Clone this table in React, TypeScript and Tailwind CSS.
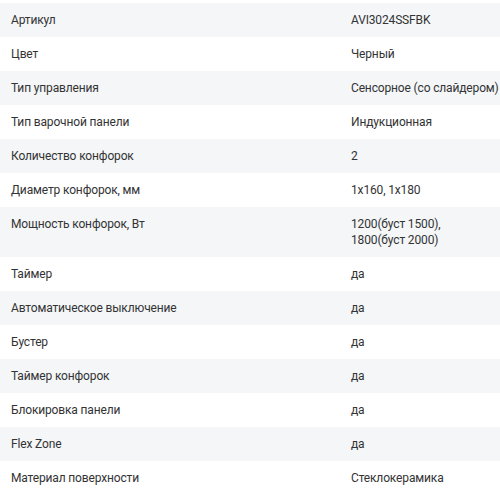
import React from "react";

const rows: [string, string[]][] = [
  ["Артикул", ["AVI3024SSFBK"]],
  ["Цвет", ["Черный"]],
  ["Тип управления", ["Сенсорное (со слайдером)"]],
  ["Тип варочной панели", ["Индукционная"]],
  ["Количество конфорок", ["2"]],
  ["Диаметр конфорок, мм", ["1x160, 1x180"]],
  ["Мощность конфорок, Вт", ["1200(буст 1500),", "1800(буст 2000)"]],
  ["Таймер", ["да"]],
  ["Автоматическое выключение", ["да"]],
  ["Бустер", ["да"]],
  ["Таймер конфорок", ["да"]],
  ["Блокировка панели", ["да"]],
  ["Flex Zone", ["да"]],
  ["Материал поверхности", ["Стеклокерамика"]],
];

export default function App() {
  return (
    <div
      className="w-[500px] h-[492px] overflow-hidden bg-white pt-[3px] text-[12px] leading-[16px] tracking-[-0.15px] text-[#333333]"
      style={{ fontFamily: "Roboto, 'Noto Sans', sans-serif" }}
    >
      {rows.map(([label, value], i) => (
        <div
          key={label}
          className={`flex py-[9px] ${i % 2 === 0 ? "bg-[#f4f6f8]" : "bg-white"}`}
        >
          <div className="w-[351px] shrink-0 pl-[11px]">{label}</div>
          <div className="flex-1 whitespace-nowrap">
            {value.map((v) => (
              <div key={v}>{v}</div>
            ))}
          </div>
        </div>
      ))}
    </div>
  );
}
